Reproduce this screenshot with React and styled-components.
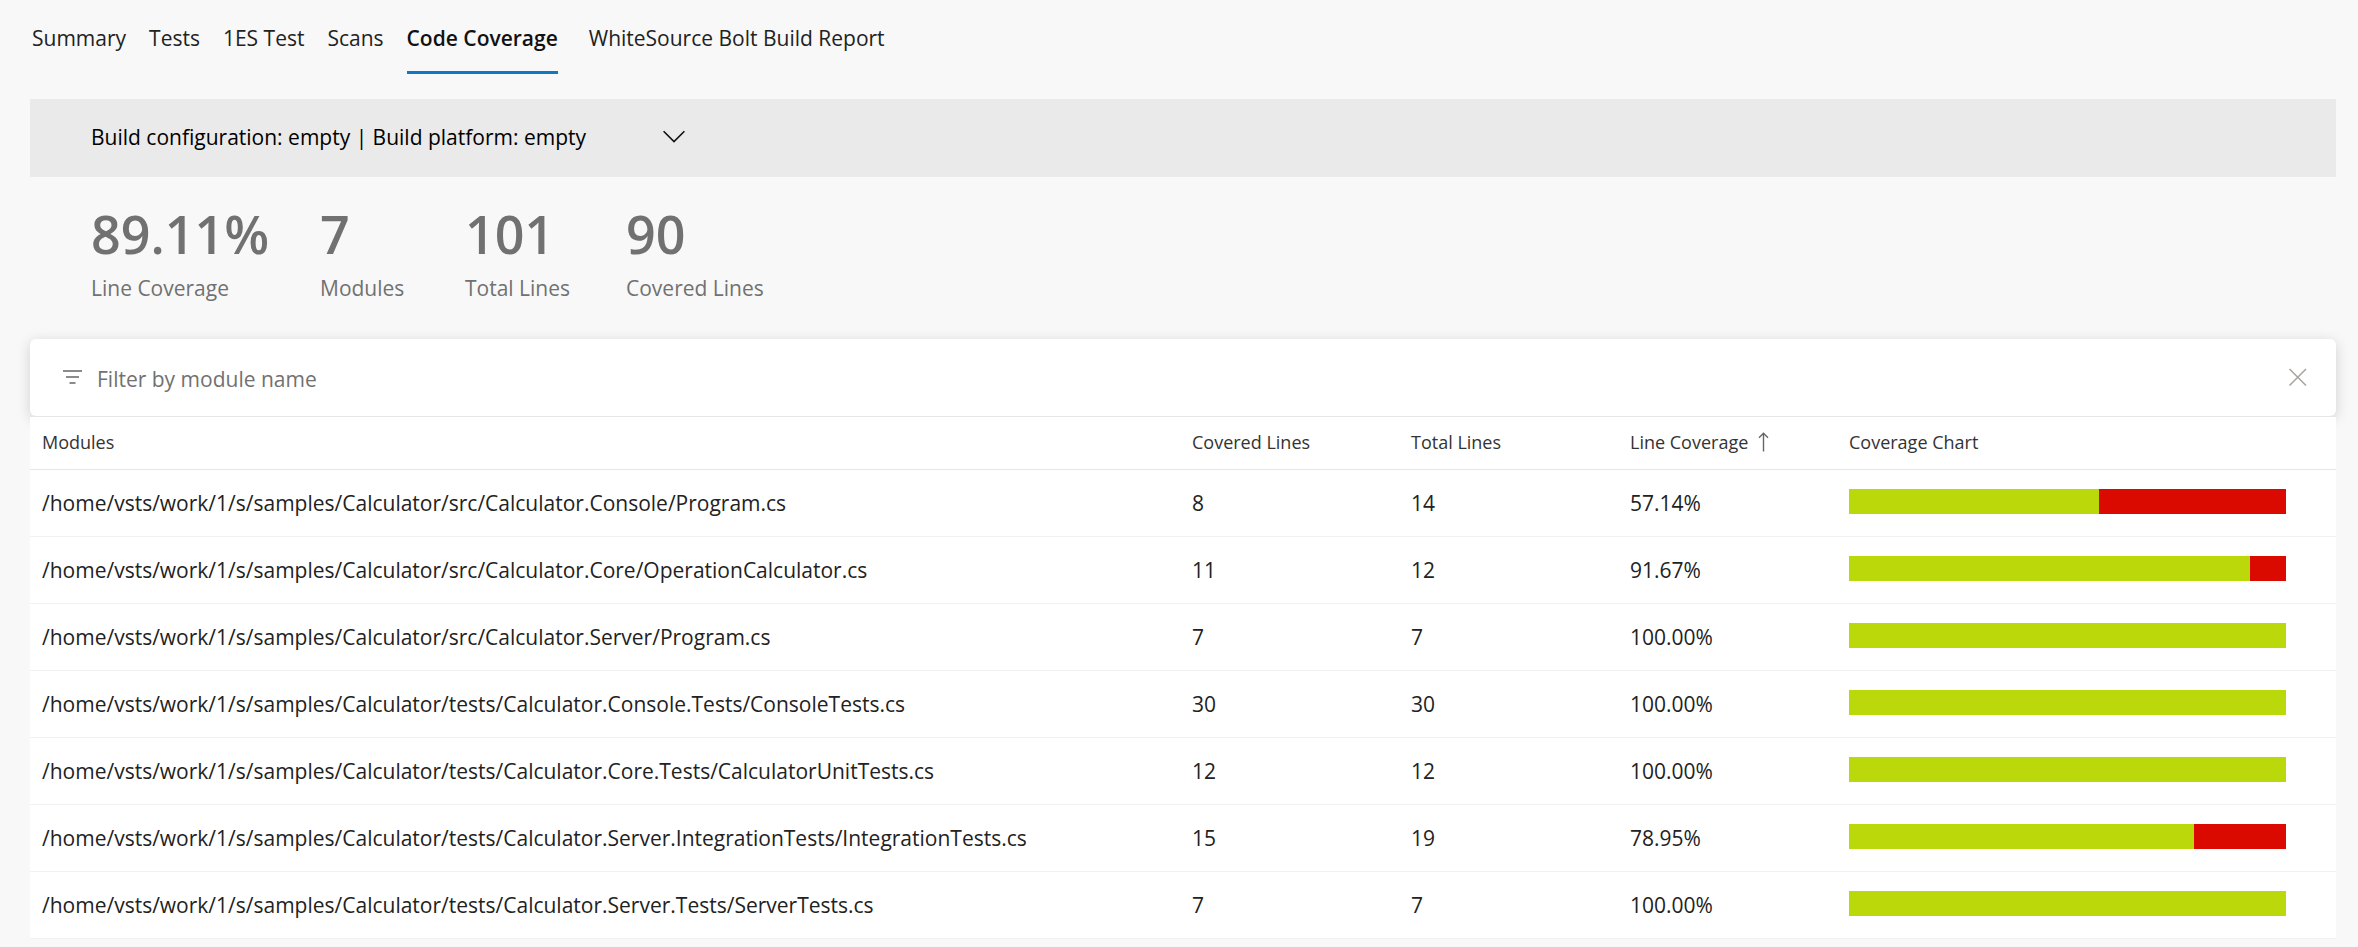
import React, { useState } from "react";
import styled, { createGlobalStyle } from "styled-components";

const GlobalStyle = createGlobalStyle`
  *, *::before, *::after { box-sizing: border-box; }
  body {
    margin: 0;
    background: #f8f8f8;
    color: #222;
    font-family: "Open Sans", "Noto Sans", sans-serif;
    font-size: 21px;
    line-height: 32px;
  }
  button, input, select { font: inherit; }
`;

const Page = styled.main`
  padding: 0 22px 8px 30px;
`;

const Tabs = styled.nav`
  display: flex;
  gap: 23px;
  height: 74px;
  padding-left: 2px;
  margin-bottom: 25px;
`;

const Tab = styled.a`
  padding-top: 22px;
  border-bottom: 3px solid ${(p) => (p.$active ? "#0f78c6" : "transparent")};
  color: ${(p) => (p.$active ? "#111" : "#222")};
  font-weight: ${(p) => (p.$active ? 600 : 400)};
  margin-right: ${(p) => (p.$active ? 8 : 0)}px;
  text-decoration: none;
  white-space: nowrap;
`;

const ConfigBar = styled.div`
  display: flex;
  align-items: center;
  height: 78px;
  padding: 0 61px 2px;
  background: #eaeaea;
`;

const SelectBox = styled.div`
  display: grid;
  align-items: center;
  width: 594px;

  > * { grid-area: 1 / 1; }
  > svg { justify-self: end; pointer-events: none; }
`;

const ConfigSelect = styled.select`
  width: 100%;
  height: 40px;
  padding: 0;
  border: 0;
  background: transparent;
  color: #000;
  appearance: none;
`;

const Stats = styled.dl`
  display: flex;
  gap: 60px;
  margin: 0;
  padding: 19px 61px 35px;
`;

const Stat = styled.div`
  display: flex;
  flex-direction: column-reverse;
  width: ${(p) => p.$width}px;
  color: #717171;
  white-space: nowrap;
`;

const StatLabel = styled.dt`
  line-height: 32px;
`;

const StatValue = styled.dd`
  margin: 0;
  font-size: 52px;
  font-weight: 600;
  line-height: 76px;
`;

const FilterBar = styled.div`
  position: relative;
  display: flex;
  align-items: center;
  height: 77px;
  padding: 0 28px 0 32px;
  border-radius: 6px;
  background: #fff;
  box-shadow: 0 3px 14px rgba(0, 0, 0, 0.16);
`;

const FilterInput = styled.input`
  flex: 1;
  min-width: 0;
  height: 48px;
  padding: 2px 0 0;
  margin-left: 13px;
  border: 0;
  outline: 0;
  background: transparent;
  color: #222;

  &::placeholder { color: #717171; opacity: 1; }
`;

const IconButton = styled.button`
  display: flex;
  padding: 0;
  border: 0;
  background: transparent;
  cursor: pointer;
`;

const Table = styled.table`
  position: relative;
  width: 100%;
  border-collapse: separate;
  border-spacing: 0;
  table-layout: fixed;
  background: #fff;
`;

const Col = styled.col`
  width: ${(p) => p.$width};
`;

const HeadCell = styled.th`
  height: 54px;
  padding: 0 12px 3px;
  border-top: 1px solid #e6e6e6;
  border-bottom: 1px solid #e6e6e6;
  color: #333;
  font-size: 18px;
  font-weight: 400;
  line-height: 28px;
  text-align: left;
`;

const SortButton = styled.button`
  display: flex;
  align-items: center;
  gap: 10px;
  padding: 0;
  border: 0;
  background: transparent;
  color: inherit;
  white-space: nowrap;
`;

const Cell = styled.td`
  height: 67px;
  padding: 0 12px 1px;
  border-bottom: 1px solid #f1f1f1;
  white-space: nowrap;
`;

const ChartCell = styled(Cell)`
  padding: 0 50px 3px 12px;
`;

const Bar = styled.div`
  height: 25px;
  background: #da0a00;
`;

const BarFill = styled.div`
  height: 100%;
  background: #bad80a;
`;

const TABS = ["Summary", "Tests", "1ES Test", "Scans", "Code Coverage", "WhiteSource Bolt Build Report"];

const STATS = [
  ["89.11%", "Line Coverage", 169],
  ["7", "Modules", 85],
  ["101", "Total Lines", 101],
  ["90", "Covered Lines", 136],
];

const ROOT = "/home/vsts/work/1/s/samples/Calculator/";

const MODULES = [
  ["src/Calculator.Console/Program.cs", 8, 14],
  ["src/Calculator.Core/OperationCalculator.cs", 11, 12],
  ["src/Calculator.Server/Program.cs", 7, 7],
  ["tests/Calculator.Console.Tests/ConsoleTests.cs", 30, 30],
  ["tests/Calculator.Core.Tests/CalculatorUnitTests.cs", 12, 12],
  ["tests/Calculator.Server.IntegrationTests/IntegrationTests.cs", 15, 19],
  ["tests/Calculator.Server.Tests/ServerTests.cs", 7, 7],
];

const ChevronIcon = () => (
  <svg width="22" height="14" viewBox="0 0 22 14" fill="none" stroke="#111" strokeWidth="1.6" aria-hidden="true">
    <path d="M0.6 1.2 11 11.6 21.4 1.2" />
  </svg>
);

const FilterIcon = () => (
  <svg width="22" height="18" viewBox="0 0 22 18" fill="none" stroke="#666" strokeWidth="1.4" aria-hidden="true">
    <path d="M1 2H20M4 8H17M7.500 14H13.500" />
  </svg>
);

const CloseIcon = () => (
  <svg width="20" height="20" viewBox="0 0 20 20" fill="none" stroke="#a6a2a0" strokeWidth="1.5" aria-hidden="true">
    <path d="M1.500 1 18 17.500M18 1 1.500 17.500" />
  </svg>
);

const SortIcon = () => (
  <svg width="12" height="20" viewBox="0 0 12 20" fill="none" stroke="#666" strokeWidth="1.4" aria-hidden="true">
    <path d="M5.500 19.500V1.500M1 5.800 5.500 1.300 10 5.800" />
  </svg>
);

export default function App() {
  const [filter, setFilter] = useState("");
  const rows = MODULES.filter(([path]) => (ROOT + path).toLowerCase().includes(filter.toLowerCase()));

  return (
    <>
      <GlobalStyle />
      <Page>
        <Tabs aria-label="Build results">
          {TABS.map((tab) => {
            const active = tab === "Code Coverage";
            return (
              <Tab key={tab} href="#" $active={active} aria-current={active ? "page" : undefined}>
                {tab}
              </Tab>
            );
          })}
        </Tabs>

        <ConfigBar>
          <SelectBox>
            <ConfigSelect aria-label="Build configuration and platform">
              <option>Build configuration: empty | Build platform: empty</option>
            </ConfigSelect>
            <ChevronIcon />
          </SelectBox>
        </ConfigBar>

        <Stats>
          {STATS.map(([value, label, width]) => (
            <Stat key={label} $width={width}>
              <StatLabel>{label}</StatLabel>
              <StatValue>{value}</StatValue>
            </Stat>
          ))}
        </Stats>

        <FilterBar>
          <FilterIcon />
          <FilterInput
            aria-label="Filter by module name"
            placeholder="Filter by module name"
            value={filter}
            onChange={(e) => setFilter(e.target.value)}
          />
          <IconButton type="button" aria-label="Clear filter" onClick={() => setFilter("")}>
            <CloseIcon />
          </IconButton>
        </FilterBar>

        <Table>
          <colgroup>
            <Col $width="auto" />
            <Col $width="219px" />
            <Col $width="219px" />
            <Col $width="219px" />
            <Col $width="499px" />
          </colgroup>
          <thead>
            <tr>
              <HeadCell scope="col">Modules</HeadCell>
              <HeadCell scope="col">Covered Lines</HeadCell>
              <HeadCell scope="col">Total Lines</HeadCell>
              <HeadCell scope="col" aria-sort="ascending">
                <SortButton type="button">
                  Line Coverage
                  <SortIcon />
                </SortButton>
              </HeadCell>
              <HeadCell scope="col">Coverage Chart</HeadCell>
            </tr>
          </thead>
          <tbody>
            {rows.map(([path, covered, total]) => {
              const percent = ((covered / total) * 100).toFixed(2) + "%";
              return (
                <tr key={path}>
                  <Cell>{ROOT + path}</Cell>
                  <Cell>{covered}</Cell>
                  <Cell>{total}</Cell>
                  <Cell>{percent}</Cell>
                  <ChartCell>
                    <Bar role="img" aria-label={percent + " covered"}>
                      <BarFill style={{ width: percent }} />
                    </Bar>
                  </ChartCell>
                </tr>
              );
            })}
          </tbody>
        </Table>
      </Page>
    </>
  );
}
